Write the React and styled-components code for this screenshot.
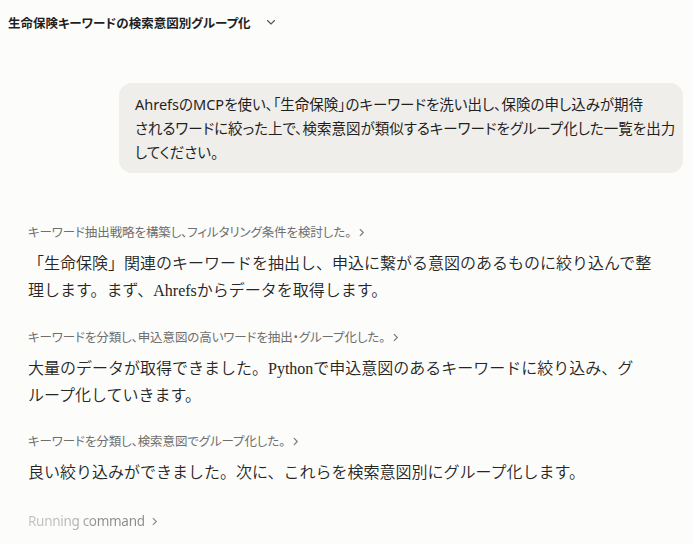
import React from 'react';
import styled, { createGlobalStyle } from 'styled-components';

const GlobalStyle = createGlobalStyle`
  html, body {
    margin: 0;
    padding: 0;
    background: #fcfcfb;
  }
  body {
    font-family: "Noto Sans", "Noto Sans CJK JP", sans-serif;
    color: #1f1f1e;
  }
`;

const Page = styled.div`
  width: 694px;
  height: 544px;
  overflow: hidden;
  display: flex;
  flex-direction: column;
`;

const TopBar = styled.header`
  display: flex;
  align-items: center;
  gap: 14px;
  height: 44px;
  padding: 0 8px;
  box-sizing: border-box;
`;

const Title = styled.h1`
  margin: 0;
  font-family: "Noto Sans CJK JP", sans-serif;
  font-feature-settings: "palt";
  font-size: 12.5px;
  font-weight: 700;
  color: #1f1f1e;
`;

const Caret = styled.svg`
  width: 12px;
  height: 12px;
  color: #555;
`;

const Thread = styled.main`
  display: flex;
  flex-direction: column;
  padding: 39px 26px 0 28px;
`;

const UserBubble = styled.div`
  align-self: flex-end;
  width: 564px;
  box-sizing: border-box;
  margin-right: -15px;
  padding: 9px 16px;
  background: #f0eeea;
  border-radius: 13px;
  font-family: "Noto Sans", "Noto Sans CJK JP", sans-serif;
  font-feature-settings: "palt";
  font-size: 14.5px;
  line-height: 24px;
  white-space: nowrap;
  color: #1f1f1e;
  margin-bottom: 49px;
`;

const Step = styled.section`
  display: flex;
  flex-direction: column;
  gap: 8px;
  margin-bottom: ${p => p.$gap}px;
`;

const StepLabel = styled.div`
  display: flex;
  align-items: center;
  gap: 6px;
  font-family: "Noto Sans CJK JP", sans-serif;
  font-feature-settings: "palt";
  font-size: 12.5px;
  line-height: 20px;
  color: #6f6f6d;
  letter-spacing: -0.1px;
`;

const Chevron = styled.svg`
  width: 9px;
  height: 9px;
  color: ${p => p.$color || '#777'};
  flex: none;
`;

const Reply = styled.p`
  margin: 0;
  font-family: "Liberation Serif", "Noto Sans CJK JP", serif;
  font-size: 16px;
  font-weight: 350;
  line-height: 27px;
  color: #262625;
`;

const Running = styled.div`
  display: flex;
  align-items: center;
  gap: 5px;
  font-family: "Noto Sans", sans-serif;
  font-size: 13.5px;
  line-height: 20px;
  letter-spacing: -0.3px;
`;

const Shimmer = styled.span`
  background: linear-gradient(90deg, #c4c4c2 0%, #b4b4b2 40%, #8e8e8c 60%, #8a8a88 100%);
  -webkit-background-clip: text;
  background-clip: text;
  color: transparent;
`;

const RightArrow = ({ color }) => (
  <Chevron $color={color} viewBox="0 0 10 10" fill="none" stroke="currentColor" strokeWidth="1.2" strokeLinecap="round" strokeLinejoin="round">
    <path d="M3.5 1.5 L7 5 L3.5 8.5" />
  </Chevron>
);

const steps = [
  {
    label: 'キーワード抽出戦略を構築し、フィルタリング条件を検討した。',
    lines: ['「生命保険」関連のキーワードを抽出し、申込に繋がる意図のあるものに絞り込んで整', '理します。まず、Ahrefsからデータを取得します。'],
    gap: 23,
  },
  {
    label: 'キーワードを分類し、申込意図の高いワードを抽出・グループ化した。',
    lines: ['大量のデータが取得できました。Pythonで申込意図のあるキーワードに絞り込み、グ', 'ループ化していきます。'],
    gap: 22,
  },
  {
    label: 'キーワードを分類し、検索意図でグループ化した。',
    lines: ['良い絞り込みができました。次に、これらを検索意図別にグループ化します。'],
    gap: 25,
  },
];

export default function App() {
  return (
    <Page>
      <GlobalStyle />
      <TopBar>
        <Title>生命保険キーワードの検索意図別グループ化</Title>
        <Caret viewBox="0 0 12 12" fill="none" stroke="currentColor" strokeWidth="1.1" strokeLinecap="round" strokeLinejoin="round">
          <path d="M2.5 4.5 L6 8 L9.5 4.5" />
        </Caret>
      </TopBar>
      <Thread>
        <UserBubble>
          AhrefsのMCPを使い、「生命保険」のキーワードを洗い出し、保険の申し込みが期待
          <br />
          されるワードに絞った上で、検索意図が類似するキーワードをグループ化した一覧を出力
          <br />
          してください。
        </UserBubble>
        {steps.map(step => (
          <Step key={step.label} $gap={step.gap}>
            <StepLabel>
              {step.label}
              <RightArrow />
            </StepLabel>
            <Reply>
              {step.lines.map((line, i) => (
                <React.Fragment key={i}>
                  {i > 0 && <br />}
                  {line}
                </React.Fragment>
              ))}
            </Reply>
          </Step>
        ))}
        <Running>
          <Shimmer>Running command</Shimmer>
          <RightArrow color="#8a8a88" />
        </Running>
      </Thread>
    </Page>
  );
}
